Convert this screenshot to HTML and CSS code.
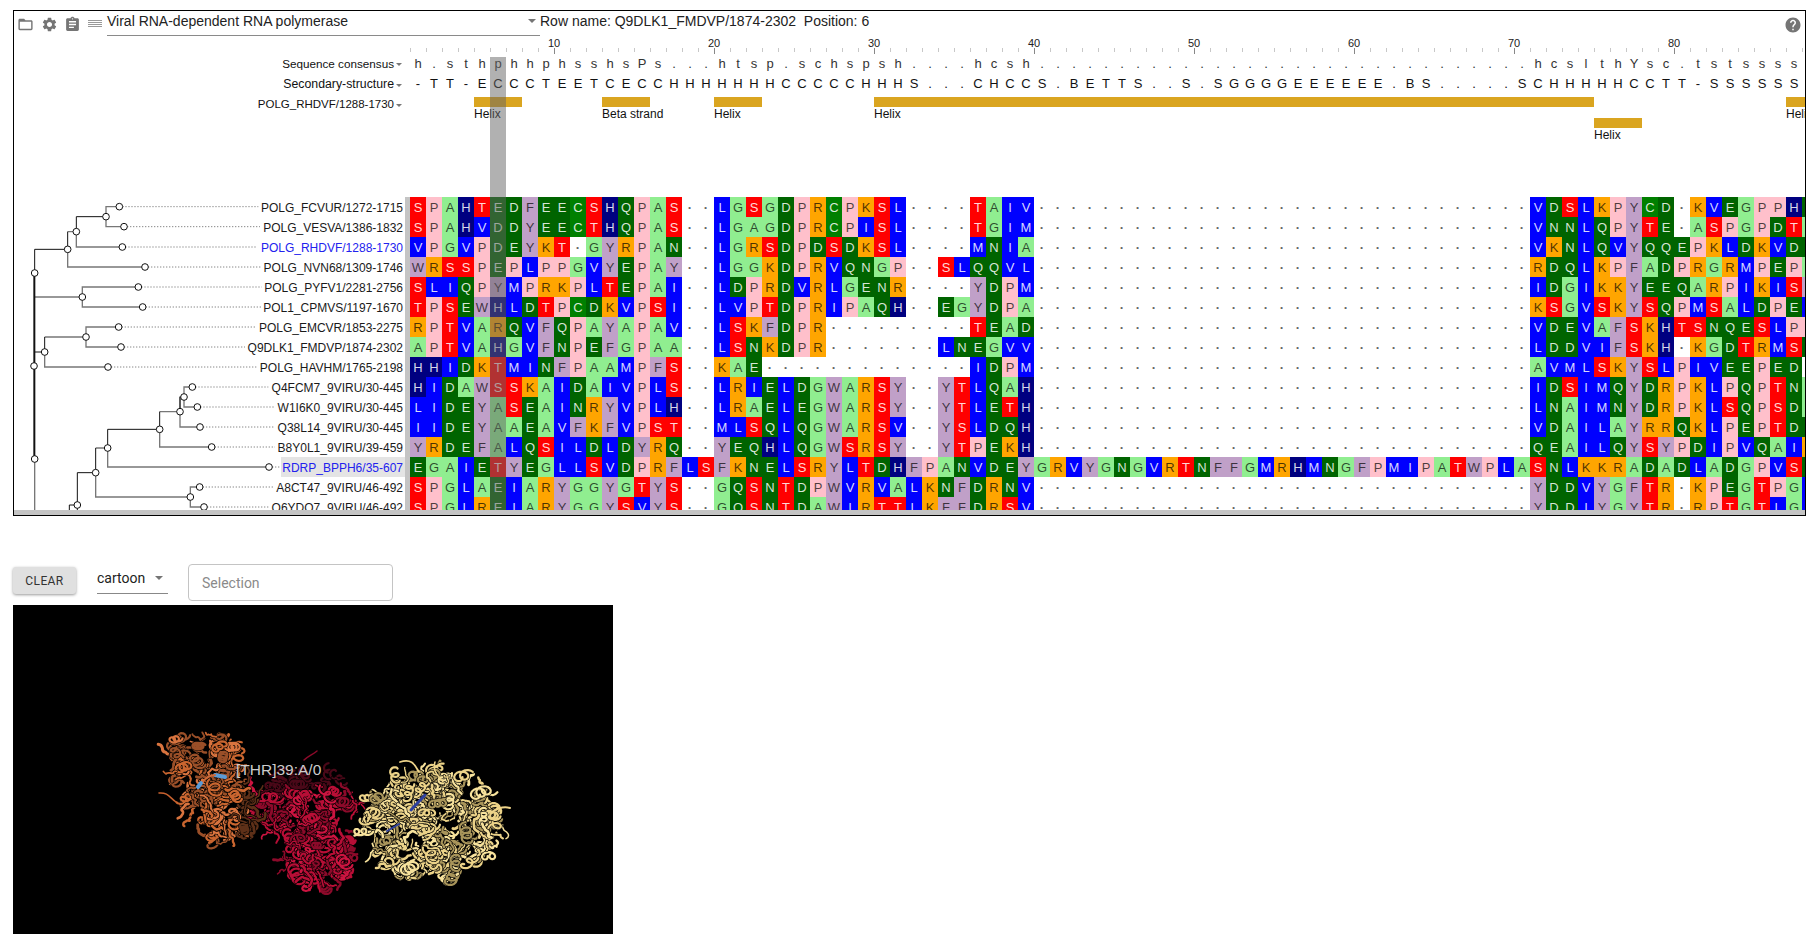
FILE: index.html
```html
<!DOCTYPE html>
<html lang="en">
<head>
    <meta charset="UTF-8">
    <title>Alignment viewer</title>
    <link rel="stylesheet" href="styles.css">
</head>
<body>
    <div class="msa-panel">
        <!-- top toolbar -->
        <div class="toolbar">
            <div class="tool-icons">
                <svg class="icon" viewBox="0 0 24 24"><path d="M20 6h-8l-2-2H4c-1.1 0-1.99.9-1.99 2L2 18c0 1.1.9 2 2 2h16c1.1 0 2-.9 2-2V8c0-1.1-.9-2-2-2zm0 12H4V8h16v10z"/></svg>
                <svg class="icon" viewBox="0 0 24 24"><path d="M19.14 12.94c.04-.3.06-.61.06-.94 0-.32-.02-.64-.07-.94l2.03-1.58c.18-.14.23-.41.12-.61l-1.92-3.32c-.12-.22-.37-.29-.59-.22l-2.39.96c-.5-.38-1.03-.7-1.62-.94l-.36-2.54c-.04-.24-.24-.41-.48-.41h-3.84c-.24 0-.43.17-.47.41l-.36 2.54c-.59.24-1.13.57-1.62.94l-2.39-.96c-.22-.08-.47 0-.59.22L2.74 8.87c-.12.21-.08.47.12.61l2.03 1.58c-.05.3-.09.63-.09.94s.02.64.07.94l-2.03 1.58c-.18.14-.23.41-.12.61l1.92 3.32c.12.22.37.29.59.22l2.39-.96c.5.38 1.03.7 1.62.94l.36 2.54c.05.24.24.41.48.41h3.84c.24 0 .44-.17.47-.41l.36-2.54c.59-.24 1.13-.56 1.62-.94l2.39.96c.22.08.47 0 .59-.22l1.92-3.32c.12-.22.07-.47-.12-.61l-2.01-1.58zM12 15.6c-1.98 0-3.6-1.62-3.6-3.6s1.62-3.6 3.6-3.6 3.6 1.62 3.6 3.6-1.62 3.6-3.6 3.6z"/></svg>
                <svg class="icon" viewBox="0 0 24 24"><path d="M19 3h-4.18C14.4 1.84 13.3 1 12 1c-1.3 0-2.4.84-2.82 2H5c-1.1 0-2 .9-2 2v14c0 1.1.9 2 2 2h14c1.1 0 2-.9 2-2V5c0-1.1-.9-2-2-2zm-7 0c.55 0 1 .45 1 1s-.45 1-1 1-1-.45-1-1 .45-1 1-1zm2 14H7v-2h7v2zm3-4H7v-2h10v2zm0-4H7V7h10v2z"/></svg>
                <svg class="icon-list" viewBox="0 0 14 7"><path d="M0 0h14v1H0zM0 2h14v1H0zM0 4h14v1H0zM0 6h14v1H0z"/></svg>
            </div>
            <div class="family-select">
                <span>Viral RNA-dependent RNA polymerase</span>
                <span class="select-arrow"></span>
            </div>
            <div class="status-text">Row name: Q9DLK1_FMDVP/1874-2302 &nbsp;Position: 6</div>
            <svg class="icon icon-help" viewBox="0 0 24 24"><path d="M12 2C6.48 2 2 6.48 2 12s4.48 10 10 10 10-4.48 10-10S17.52 2 12 2zm1 17h-2v-2h2v2zm2.07-7.75l-.9.92C13.45 12.9 13 13.5 13 15h-2v-.5c0-1.1.45-2.1 1.17-2.83l1.24-1.26c.37-.36.59-.86.59-1.41 0-1.1-.9-2-2-2s-2 .9-2 2H8c0-2.21 1.79-4 4-4s4 1.79 4 4c0 .88-.36 1.68-.93 2.25z"/></svg>
        </div>

        <div class="msa-main">
            <!-- tracks above the alignment -->
            <div class="msa-head">
                <div class="track-names">
                    <div class="track-name name-consensus">Sequence consensus<span class="small-arrow"></span></div>
                    <div class="track-name name-structure">Secondary-structure<span class="small-arrow"></span></div>
                    <div class="track-name">POLG_RHDVF/1288-1730<span class="small-arrow"></span></div>
                </div>
                <div class="tracks">
                    <div class="ruler" id="ruler"></div>
                    <div class="letter-row consensus" id="consensus"></div>
                    <div class="letter-row structure" id="structure"></div>
                    <div class="feature-track" id="features"></div>
                </div>
            </div>

            <!-- tree, names and residues -->
            <div class="msa-body">
                <div class="tree-pane">
                    <svg class="tree" viewBox="42 21 1173 939">
                        <g class="leaf-dots">
                            <path d="M358 50H775M372 110H780M367 171H772M435 231H782M415 291H785M428 351H785M356 411H770M363 471H735M324 531H772"/>
                            <path d="M577 591H805M592 651H825M600 711H825M635 771H825M807 831H845M599 891H822M612 951H805"/>
                        </g>
                        <g class="edges">
                            <path d="M358 50H318V110H372M229 125V171H367M203 178V231H435M229 125H203M104 321H247M415 291H247V351H428"/>
                            <path d="M356 411H258V471H363M134 441H258M134 486V531H324M577 591H552V651H592M552 621H540V711H600M479 665H540M479 718V771H635M323 774V831H807M287 774H323M287 848V921H571M599 891H571V951H612"/>
                            <path d="M104 807V990"/>
                        </g>
                        <g class="edges-dark">
                            <path d="M318 80H229V125M203 125V178M203 178H104V249M134 441V486M134 486H102M540 665V621M479 665V718M479 718H323V774M287 774V848M287 848H232V1000M232 945H208V1000"/>
                        </g>
                        <path class="edge-trunk" d="M103 249V807"/>
                        <g class="nodes">
                            <circle cx="358" cy="50" r="10"/><circle cx="372" cy="110" r="10"/><circle cx="367" cy="171" r="10"/><circle cx="435" cy="231" r="10"/>
                            <circle cx="415" cy="291" r="10"/><circle cx="428" cy="351" r="10"/><circle cx="356" cy="411" r="10"/><circle cx="363" cy="471" r="10"/>
                            <circle cx="324" cy="531" r="10"/><circle cx="577" cy="591" r="10"/><circle cx="592" cy="651" r="10"/><circle cx="600" cy="711" r="10"/>
                            <circle cx="635" cy="771" r="10"/><circle cx="807" cy="831" r="10"/><circle cx="599" cy="891" r="10"/><circle cx="612" cy="951" r="10"/>
                            <circle cx="318" cy="80" r="10"/><circle cx="229" cy="125" r="10"/><circle cx="203" cy="178" r="10"/><circle cx="104" cy="249" r="10"/>
                            <circle cx="247" cy="321" r="10"/><circle cx="258" cy="441" r="10"/><circle cx="134" cy="486" r="10"/><circle cx="102" cy="528" r="10"/>
                            <circle cx="104" cy="807" r="10"/><circle cx="552" cy="621" r="10"/><circle cx="540" cy="665" r="10"/><circle cx="479" cy="718" r="10"/>
                            <circle cx="323" cy="774" r="10"/><circle cx="287" cy="848" r="10"/><circle cx="571" cy="921" r="10"/><circle cx="232" cy="945" r="10"/>
                        </g>
                    </svg>
                    <div class="seq-names" id="names"></div>
                </div>
                <div class="residues" id="residues"></div>
            </div>

            <div class="column-mark"></div>
        </div>
        <div class="h-scroll"></div>
    </div>

    <!-- structure viewer controls -->
    <div class="viewer-controls">
        <button class="clear-btn">CLEAR</button>
        <div class="style-select">
            <span>cartoon</span>
            <span class="select-arrow"></span>
        </div>
        <input class="selection-input" type="text" placeholder="Selection">
    </div>

    <div class="viewer">
        <svg class="protein" id="protein" viewBox="13 605 600 329"></svg>
        <div class="atom-label">[THR]39:A/0</div>
    </div>

    <script src="app.js"></script>
</body>
</html>
```

FILE: styles.css
```css
body {
    margin: 0;
    padding: 10px 0 0 13px;
    height: 934px;
    box-sizing: border-box;
    overflow: hidden;
    background: #fff;
    color: #222;
    font-family: Roboto, sans-serif;
}

/* Alignment panel */
.msa-panel {
    width: 1793px;
    height: 506px;
    box-sizing: border-box;
    border: 1px solid #000;
    overflow: hidden;
}

.toolbar {
    display: flex;
    height: 26px;
    align-items: flex-start;
}

.tool-icons {
    display: flex;
    width: 93px;
    height: 26px;
    box-sizing: border-box;
}

.icon {
    flex: 0 0 17px;
    width: 17px;
    height: 17px;
    margin: 5px 3.25px 0;
    fill: #757575;
}

.icon-list {
    flex: 0 0 14px;
    width: 14px;
    height: 7px;
    margin: 9px 0 0 3.5px;
    fill: #999;
}

.family-select {
    display: flex;
    justify-content: space-between;
    align-items: center;
    width: 433px;
    height: 25px;
    padding-bottom: 5px;
    box-sizing: border-box;
    border-bottom: 1px solid #8a8a8a;
    font-family: "Liberation Sans", sans-serif;
    font-size: 14px;
}

.select-arrow {
    width: 0;
    height: 0;
    border: 4px solid transparent;
    border-top: 4px solid #757575;
    border-bottom: 0;
    margin-right: 4px;
}

.status-text {
    height: 20px;
    line-height: 20px;
    font-family: "Liberation Sans", sans-serif;
    font-size: 14px;
    color: #222;
}

.icon-help {
    width: 18px;
    height: 18px;
    flex-basis: 18px;
    margin: 5px 3px 0 auto;
}

.msa-main {
    position: relative;
    height: 473px;
    overflow: hidden;
}

.msa-head {
    display: flex;
    height: 160px;
}

.track-names {
    width: 396px;
    padding-top: 17px;
    box-sizing: border-box;
}

.track-name {
    display: flex;
    justify-content: flex-end;
    align-items: center;
    height: 20px;
    padding-right: 8px;
    box-sizing: border-box;
    font-family: "Liberation Sans", sans-serif;
    font-size: 11.5px;
    color: #111;
}

.name-consensus {
    padding-bottom: 2px;
    font-size: 11.7px;
}

.name-structure {
    font-size: 12.3px;
}

.small-arrow {
    width: 0;
    height: 0;
    margin: 2px 0 0 2px;
    border: 3.5px solid transparent;
    border-top: 3.5px solid #777;
    border-bottom: 0;
}

.tracks {
    width: 1395px;
    overflow: hidden;
    font-family: "Liberation Sans", sans-serif;
}

.ruler {
    display: flex;
    height: 17px;
    font-size: 11px;
    line-height: 12px;
    color: #222;
    background: repeating-linear-gradient(to right, #c8c8c8 0 1px, transparent 1px 16px) 0 11px / 100% 4px no-repeat;
}

.rule-mark {
    position: relative;
    flex: 0 0 160px;
}

.rule-mark:first-child {
    flex-basis: 144px;
}

.rule-num {
    display: inline-block;
    transform: translateX(-50%);
}

.rule-mark::after {
    content: "";
    position: absolute;
    left: 0;
    top: 11px;
    width: 1px;
    height: 6px;
    background: #888;
}

.rule-mark:first-child::after {
    display: none;
}

.letter-row {
    display: flex;
    height: 20px;
}

.letter-row span {
    flex: 0 0 16px;
    text-align: center;
    font-size: 13px;
    line-height: 20px;
}

.consensus span {
    color: #333;
}

.structure span {
    color: #111;
}

.feature-track {
    padding-top: 3px;
}

.feature-lane {
    display: grid;
    grid-template-columns: repeat(88, 16px);
    height: 21px;
}

.feature {
    height: 10px;
    font-size: 12px;
    line-height: 15px;
    white-space: nowrap;
    color: #111;
}

.feature::before {
    content: "";
    display: block;
    height: 10px;
    background: #daa520;
}

.msa-body {
    display: flex;
    height: 313px;
    overflow: hidden;
}

.tree-pane {
    display: grid;
    flex: 0 0 396px;
    height: 313px;
    box-sizing: border-box;
    border-right: 5px solid #c4c4c4;
}

.tree,
.seq-names {
    grid-area: 1 / 1;
}

.tree {
    width: 391px;
    height: 313px;
}

.leaf-dots {
    fill: none;
    stroke: #888;
    stroke-width: 3;
    stroke-dasharray: 4 5;
}

.edges {
    fill: none;
    stroke: #777;
    stroke-width: 4;
}

.edges-dark {
    fill: none;
    stroke: #111;
    stroke-width: 3;
}

.edge-trunk {
    fill: none;
    stroke: #111;
    stroke-width: 6;
}

.nodes {
    fill: #fff;
    stroke: #111;
    stroke-width: 3;
}

.seq-names {
    font-family: "Liberation Sans", sans-serif;
    font-size: 12px;
    color: #1a1a1a;
}

.seq-name {
    height: 20px;
    line-height: 20px;
    text-align: right;
}

.seq-name span {
    display: inline-block;
    height: 20px;
    line-height: 22px;
    padding-right: 2px;
    padding-left: 1px;
}

.seq-name.picked span {
    color: #2222ee;
}

.seq-name.current span {
    background: #e4e4e4;
}

.residues {
    flex: 1;
    overflow: hidden;
    font-family: "Liberation Sans", sans-serif;
}

.res-row {
    display: flex;
    height: 20px;
}

.res {
    flex: 0 0 16px;
    width: 16px;
    height: 20px;
    text-align: center;
    font-size: 13px;
    line-height: 22px;
    color: rgba(0, 0, 0, 0.7);
}

/* residue colours */
.c-red { background: #ff0000; color: rgba(255, 255, 255, 0.85); }
.c-pink { background: #ffc0cb; }
.c-lime { background: #90ee90; }
.c-navy { background: #000080; color: rgba(255, 255, 255, 0.85); }
.c-dark { background: #006400; color: rgba(255, 255, 255, 0.85); }
.c-green { background: #008000; color: rgba(255, 255, 255, 0.85); }
.c-blue { background: #0000ff; color: rgba(255, 255, 255, 0.85); }
.c-orange { background: #ffa500; }
.c-purple { background: #c0a0c8; }
.c-gap { color: #666; font-weight: bold; }

.column-mark {
    position: absolute;
    left: 476px;
    top: 20px;
    width: 16px;
    height: 453px;
    background: rgba(99, 99, 99, 0.5);
}

.h-scroll {
    height: 5px;
    background: #c4c4c4;
}

/* Structure viewer */
.viewer-controls {
    display: flex;
    align-items: flex-start;
    height: 37px;
    margin-top: 48px;
    margin-bottom: 4px;
}

.clear-btn {
    width: 63px;
    height: 27px;
    margin-top: 3px;
    padding: 0;
    border: none;
    border-radius: 3px;
    background: #e0e0e0;
    box-shadow: 0 1px 3px rgba(0, 0, 0, 0.4);
    font-family: Roboto, sans-serif;
    font-size: 12px;
    font-weight: 400;
    letter-spacing: 0.4px;
    color: #333;
}

.style-select {
    display: flex;
    justify-content: space-between;
    align-items: center;
    width: 71px;
    height: 30px;
    margin-left: 21px;
    padding-bottom: 2px;
    box-sizing: border-box;
    border-bottom: 1px solid #888;
    font-size: 14px;
}

.style-select .select-arrow {
    margin-right: 5px;
}

.selection-input {
    width: 205px;
    height: 37px;
    margin-left: 20px;
    padding: 0 13px;
    box-sizing: border-box;
    border: 1px solid #c4c4c4;
    border-radius: 4px;
    font-family: Roboto, sans-serif;
    font-size: 14px;
}

.selection-input::placeholder {
    color: #8a8a8a;
}

.viewer {
    position: relative;
    width: 600px;
    height: 329px;
    background: #000;
}

.protein {
    display: block;
    width: 600px;
    height: 329px;
}

.atom-label {
    position: absolute;
    left: 223px;
    top: 156px;
    font-family: "Liberation Sans", sans-serif;
    font-size: 15.5px;
    color: #ccc;
}
```

FILE: app.js
```js
// alignment data
const GAPS = ".".repeat(31);
const SEQS = [
    ["POLG_FCVUR/1272-1715", "SPAHTEDFEECSHQPAS..LGSGDPRCPKSL....TAIV", GAPS, "VDSLKPYCD.KVEGPPHE"],
    ["POLG_VESVA/1386-1832", "SPAHVDDYEECTHQPAS..LGAGDPRCPISL....TGIM", GAPS, "VNNLQPYTE.ASPGPDTA"],
    ["POLG_RHDVF/1288-1730", "VPGVPDEYKT.GYRPAN..LGRSDPDSDKSL....MNIA", GAPS, "VKNLQVYQQEPKLDKVDE"],
    ["POLG_NVN68/1309-1746", "WRSSPEPLPPGVYEPAY..LGGKDPRVQNGP..SLQQVL", GAPS, "RDQLKPFADPRGRMPEPA"],
    ["POLG_PYFV1/2281-2756", "SLIQPYMPRKPLTEPAI..LDPRDVRLGENR....YDPM", GAPS, "IDGIKKYEEQARPIKISY"],
    ["POL1_CPMVS/1197-1670", "TPSEWHLDTPCDKVPSI..LVPTDPRIPAQH..EGYDPA", GAPS, "KSGVSKYSQPMSALDPEL"],
    ["POLG_EMCVR/1853-2275", "RPTVARQVFQPAYAPAV..LSKFDPR.........TEAD", GAPS, "VDEVAFSKHTSNQESLPP"],
    ["Q9DLK1_FMDVP/1874-2302", "APTVAHGVFNPEFGPAA..LSNKDPR.......LNEGVV", GAPS, "LDDVIFSKH.KGDTRMSE"],
    ["POLG_HAVHM/1765-2198", "HHIDKTMINFPAAMPFS..KAE.............IDPM", GAPS, "AVMLSKYSLPIVEEPED."],
    ["Q4FCM7_9VIRU/30-445", "HIDAWSSKAIDAIVPLS..LRIELDGWARSY..YTLQAH", GAPS, "IDSIMQYDRPKLPQPTNA"],
    ["W1I6K0_9VIRU/30-445", "LIDEYASEAINRYVPLH..LRAELEGWARSY..YTLETH", GAPS, "LNAIMNYDRPKLSQPSDA"],
    ["Q38L14_9VIRU/30-445", "IIDEYAAEAVFKFVPST..MLSQLQGWARSV..YSLDQH", GAPS, "VDAILAYRRQKLPEPTDE"],
    ["B8Y0L1_9VIRU/39-459", "YRDEFALQSILDLDYRQ..YEQHLQGWSRSY..YTPEKH", GAPS, "QEAILQYSYPDIPVQAIR"],
    ["RDRP_BPPH6/35-607", "EGAIETYEGLLSVDPRFLSFKNELSRYLTDHFPANVDEY", "GRVYGNGVRTNFFGMRHMNGFPMIPATWPLA", "SNLKKRADADLADGPVSE"],
    ["A8CT47_9VIRU/46-492", "SPGLAEIARYGGYGTYS..GQSNTDPWVRVALKNFDRNV", GAPS, "YDDVYGFTR.KPEGTPGL"],
    ["Q6YDQ7_9VIRU/46-492", "SPGLREIARYGGYSVYS..GQSNTDAWIRTTLKFFDRSV", GAPS, "YDDIYGYTR.RPTGTLGL"]
];
const PICKED = ["POLG_RHDVF/1288-1730", "RDRP_BPPH6/35-607"];

const COLORS = {
    S: "red", T: "red", P: "pink", A: "lime", G: "lime", H: "navy",
    E: "dark", D: "dark", Q: "dark", N: "dark", C: "green",
    L: "blue", I: "blue", V: "blue", M: "blue",
    R: "orange", K: "orange", F: "purple", W: "purple", Y: "purple",
    ".": "gap"
};

const CONSENSUS = "h.sthphhphsshsPs...htsp.schspsh....hcsh" + ".".repeat(31) + "hcslthYsc.tstssss";
const STRUCTURE = "-TT-ECCCTEETCECCHHHHHHHCCCCCHHHS...CHCCS.BETTS..S.SGGGGEEEEEE.BS.....SCHHHHHCCTT-SSSSSS";
const FEATURES = [
    [[5, 3], [13, 3], [20, 3], [30, 45], [87, 2]],
    [[75, 3]]
];

function fillLetters(id, text) {
    const row = document.getElementById(id);
    for (const ch of text) {
        const s = document.createElement("span");
        s.textContent = ch;
        row.appendChild(s);
    }
}

function buildRuler() {
    const ruler = document.getElementById("ruler");
    for (let n = 0; n <= 80; n += 10) {
        const mark = document.createElement("div");
        mark.className = "rule-mark";
        if (n > 0) {
            // the number sits on the tick of the column after it
            const num = document.createElement("span");
            num.className = "rule-num";
            num.textContent = n;
            mark.appendChild(num);
        }
        ruler.appendChild(mark);
    }
}

function buildFeatures() {
    const box = document.getElementById("features");
    for (const lane of FEATURES) {
        const el = document.createElement("div");
        el.className = "feature-lane";
        lane.forEach(f => {
            const item = document.createElement("div");
            item.className = "feature";
            item.style.gridColumn = f[0] + " / span " + f[1];
            item.textContent = f[0] === 13 ? "Beta strand" : "Helix";
            el.appendChild(item);
        });
        box.appendChild(el);
    }
}

function buildAlignment() {
    const names = document.getElementById("names");
    const residues = document.getElementById("residues");
    for (const seq of SEQS) {
        const name = document.createElement("div");
        name.className = "seq-name";
        if (PICKED.includes(seq[0])) name.classList.add("picked");
        if (seq[0].startsWith("RDRP")) name.classList.add("current");
        const label = document.createElement("span");
        label.textContent = seq[0];
        name.appendChild(label);
        names.appendChild(name);

        const row = document.createElement("div");
        row.className = "res-row";
        for (const ch of seq[1] + seq[2] + seq[3]) {
            const cell = document.createElement("div");
            cell.className = "res c-" + COLORS[ch];
            cell.textContent = ch === "." ? "\u00b7" : ch;
            row.appendChild(cell);
        }
        residues.appendChild(row);
    }
}

// ribbons of the 3D structure, drawn from a fixed seed so it never changes
let seed = 20240611;
function rand() {
    seed = (seed * 1664525 + 1013904223) % 4294967296;
    return seed / 4294967296;
}

function addPath(svg, d, color, width) {
    const p = document.createElementNS("http://www.w3.org/2000/svg", "path");
    p.setAttribute("d", d);
    p.setAttribute("fill", "none");
    p.setAttribute("stroke", color);
    p.setAttribute("stroke-width", width);
    p.setAttribute("stroke-linecap", "round");
    p.setAttribute("stroke-linejoin", "round");
    svg.appendChild(p);
}

function coil(x, y, angle, len, radius, turns) {
    const dx = Math.cos(angle), dy = Math.sin(angle);
    let d = "";
    const steps = Math.round(turns * 14);
    for (let i = 0; i <= steps; i++) {
        const t = i / steps;
        const phi = t * turns * Math.PI * 2;
        const px = x + dx * t * len + Math.cos(phi) * radius;
        const py = y + dy * t * len + Math.sin(phi) * radius * 0.8;
        d += (i ? "L" : "M") + px.toFixed(1) + " " + py.toFixed(1);
    }
    return d;
}

function strand(x, y, angle, len) {
    let d = "M" + x.toFixed(1) + " " + y.toFixed(1);
    for (let i = 0; i < 4; i++) {
        angle += (rand() - 0.5) * 2.6;
        const nx = x + Math.cos(angle) * len / 4;
        const ny = y + Math.sin(angle) * len / 4;
        d += "Q" + ((x + nx) / 2 + (rand() - 0.5) * 6).toFixed(1) + " " + ((y + ny) / 2 + (rand() - 0.5) * 6).toFixed(1) + " " + nx.toFixed(1) + " " + ny.toFixed(1);
        x = nx;
        y = ny;
    }
    return d;
}

function drawChain(svg, blob) {
    for (let i = 0; i < blob.count; i++) {
        const a = rand() * Math.PI * 2;
        const r = Math.sqrt(rand()) * 0.76;
        const x = blob.x + Math.cos(a) * r * blob.rx;
        const y = blob.y + Math.sin(a) * r * blob.ry;
        const shade = blob.shade(x, y, rand());
        const dir = rand() * Math.PI * 2;
        let d;
        let w;
        if (rand() < 0.45) {
            d = coil(x, y, dir, 6 + rand() * 10, 3.5 + rand() * 2.5, 1.5 + rand() * 1.5);
            w = 2.2;
        } else {
            d = strand(x, y, dir, 12 + rand() * 14);
            w = 1.4 + rand() * 1.6;
        }
        addPath(svg, d, "#000", w + 1.2);
        addPath(svg, d, shade, w);
    }
}

function buildProtein() {
    const svg = document.getElementById("protein");
    const redShade = (x, y, n) => y < 790 ? "#4a0818" : (n < 0.3 ? "#8c0a2a" : n < 0.75 ? "#b80e36" : "#cc1440");
    const orangeShade = (x, y, n) => x > 238 ? "#5e3018" : (n < 0.35 ? "#9a4f28" : n < 0.8 ? "#c9652f" : "#d9743f");
    const yellowShade = (x, y, n) => n < 0.2 ? "#a8945a" : n < 0.7 ? "#ebd288" : "#f7e29c";

    // the red chain sits behind the other two, with a dim top
    drawChain(svg, { x: 305, y: 805, rx: 68, ry: 44, count: 100, shade: redShade });
    drawChain(svg, { x: 318, y: 850, rx: 44, ry: 50, count: 90, shade: redShade });
    // the orange chain leans to the lower right
    drawChain(svg, { x: 202, y: 762, rx: 48, ry: 42, count: 80, shade: orangeShade });
    drawChain(svg, { x: 222, y: 808, rx: 46, ry: 42, count: 80, shade: orangeShade });
    drawChain(svg, { x: 431, y: 824, rx: 88, ry: 70, count: 250, shade: yellowShade });

    // tails sticking out of the chains
    addPath(svg, "M159 793C168 792 170 798 176 802", "#c9622f", 1.5);
    addPath(svg, "M317 751C312 755 308 756 304 760", "#8c0a2a", 1.5);
    addPath(svg, "M320 892C318 884 318 880 314 874", "#c20f3a", 1.5);
    addPath(svg, "M435 762C432 772 439 776 443 782", "#eed48a", 1.5);
    addPath(svg, "M400 762C413 758 415 766 419 772", "#eed48a", 1.8);
    addPath(svg, "M510 808C504 806 498 808 492 812", "#eed48a", 2);
    // the picked residues
    addPath(svg, "M215 775L225 777", "#5b9bd5", 4);
    addPath(svg, "M203 782C207 776 211 775 215 775", "#cf6a38", 2);
    addPath(svg, "M198 787L201 783", "#5b9bd5", 4);
    addPath(svg, "M425 795L411 810", "#2d3f9e", 3);
    addPath(svg, "M399 824L387 831", "#2d3f9e", 2);
}

fillLetters("consensus", CONSENSUS);
fillLetters("structure", STRUCTURE);
buildRuler();
buildFeatures();
buildAlignment();
buildProtein();
```
